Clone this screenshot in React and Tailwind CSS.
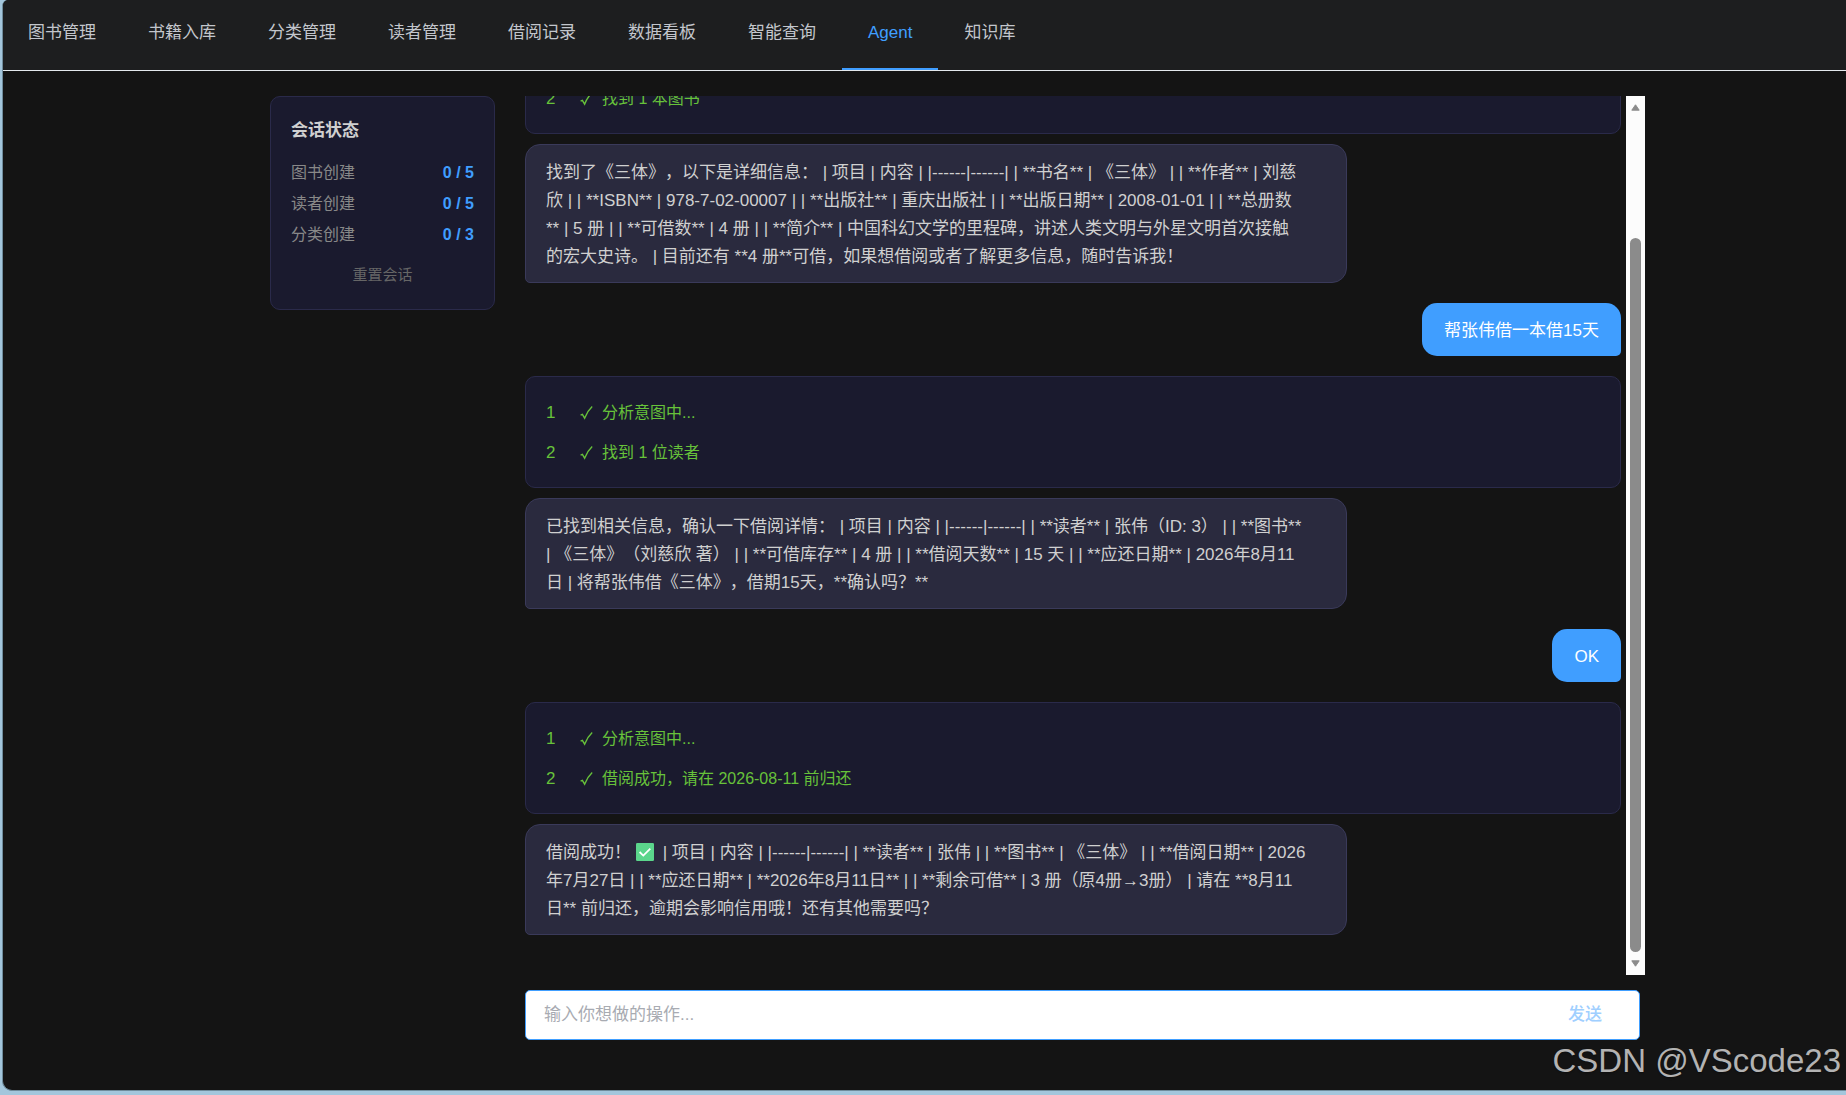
import { Fragment, useState } from 'react';

const TABS = ['图书管理', '书籍入库', '分类管理', '读者管理', '借阅记录', '数据看板', '智能查询', 'Agent', '知识库'];

const QUOTAS = [
  { label: '图书创建', value: '0 / 5' },
  { label: '读者创建', value: '0 / 5' },
  { label: '分类创建', value: '0 / 3' },
];

const MESSAGES = [
  {
    role: 'agent',
    steps: ['分析意图中...', '找到 1 本图书'],
    text: `找到了《三体》，以下是详细信息： | 项目 | 内容 | |------|------| | **书名** | 《三体》 | | **作者** | 刘慈
欣 | | **ISBN** | 978-7-02-00007 | | **出版社** | 重庆出版社 | | **出版日期** | 2008-01-01 | | **总册数
** | 5 册 | | **可借数** | 4 册 | | **简介** | 中国科幻文学的里程碑，讲述人类文明与外星文明首次接触
的宏大史诗。 | 目前还有 **4 册**可借，如果想借阅或者了解更多信息，随时告诉我！`,
  },
  { role: 'user', text: '帮张伟借一本借15天' },
  {
    role: 'agent',
    steps: ['分析意图中...', '找到 1 位读者'],
    text: `已找到相关信息，确认一下借阅详情： | 项目 | 内容 | |------|------| | **读者** | 张伟（ID: 3） | | **图书**
| 《三体》（刘慈欣 著） | | **可借库存** | 4 册 | | **借阅天数** | 15 天 | | **应还日期** | 2026年8月11
日 | 将帮张伟借《三体》，借期15天，**确认吗？**`,
  },
  { role: 'user', text: 'OK' },
  {
    role: 'agent',
    steps: ['分析意图中...', '借阅成功，请在 2026-08-11 前归还'],
    text: `借阅成功！✅ | 项目 | 内容 | |------|------| | **读者** | 张伟 | | **图书** | 《三体》 | | **借阅日期** | 2026
年7月27日 | | **应还日期** | **2026年8月11日** | | **剩余可借** | 3 册（原4册→3册） | 请在 **8月11
日** 前归还，逾期会影响信用哦！还有其他需要吗？`,
  },
];

const DoneEmoji = () => (
  <svg viewBox="0 0 18 18" className="inline-block w-[18px] h-[18px] ml-[5px] mr-1 align-[-3px]" role="img" aria-label="完成">
    <rect x="0" y="0" width="18" height="18" rx="1.2" fill="#5bd68c" />
    <path d="M3.6 9l3.7 3.6 7-7" fill="none" stroke="#fff" strokeWidth="1.8" />
  </svg>
);

const StepCheck = () => (
  <svg viewBox="0 0 13 15" className="w-[13px] h-[15px] mr-[9px] shrink-0" aria-hidden="true">
    <path d="M0.6 9.2L2.4 8.4L4.6 12.2C6.4 7.6 8.8 3.8 12.2 0.6" fill="none" stroke="currentColor" strokeWidth="1.4" />
  </svg>
);

// ✅ is swapped for an inline icon
const renderText = (text) =>
  text.split('✅').map((part, i) => (
    <Fragment key={i}>
      {i > 0 && <DoneEmoji />}
      {part}
    </Fragment>
  ));

const NavBar = ({ active, onChange }) => (
  <nav className="flex h-[71px] -ml-px shrink-0 bg-[#1d1e1f] border-b border-[#e4e9ed]">
    {TABS.map((tab) => (
      <button
        key={tab}
        type="button"
        onClick={() => onChange(tab)}
        className={`flex items-start pt-[21px] px-[26px] leading-6 whitespace-nowrap border-b-2 ${
          tab === active ? 'text-[#409eff] border-[#409eff]' : 'text-[#c3c6cc] border-transparent'
        }`}
      >
        {tab}
      </button>
    ))}
  </nav>
);

const SessionPanel = () => (
  <aside className="w-[225px] shrink-0 self-start p-5 rounded-[10px] border border-[#2a2a4a] bg-[#1a1a2e]">
    <h3 className="mb-3 leading-7 font-bold text-[#d0d0d0]">会话状态</h3>
    {QUOTAS.map((q) => (
      <div key={q.label} className="flex items-center justify-between h-[31px] text-base">
        <span className="text-[#888888]">{q.label}</span>
        <span className="font-bold text-[#409eff]">{q.value}</span>
      </div>
    ))}
    <button type="button" className="block w-full h-7 mt-[11px] text-[15px] text-[#666666]">
      重置会话
    </button>
  </aside>
);

const StepCard = ({ steps }) => (
  <ol className="mb-2.5 pt-4 pb-3.5 px-5 rounded-[10px] border border-[#2a2a4a] bg-[#1a1a2e] text-[#67c23a]">
    {steps.map((step, i) => (
      <li key={step + i} className="flex items-center h-10">
        <span className="w-[34px]">{i + 1}</span>
        <StepCheck />
        <span className="text-base">{step}</span>
      </li>
    ))}
  </ol>
);

const Message = ({ message }) => {
  if (message.role === 'user') {
    return (
      <div className="flex justify-end">
        <p className="pt-3.5 pb-[11px] px-[22px] leading-7 rounded-[15px] rounded-br-[5px] bg-[#409eff] text-white">
          {message.text}
        </p>
      </div>
    );
  }

  return (
    <div>
      <StepCard steps={message.steps} />
      <p className="w-3/4 pt-3.5 pb-[11px] pl-5 leading-7 whitespace-pre-line rounded-[15px] rounded-bl-[5px] border border-[#3a3a5a] bg-[#2a2a3e] text-[#d0d0d0]">
        {renderText(message.text)}
      </p>
    </div>
  );
};

const ScrollBar = () => (
  <div className="flex flex-col items-center w-[19px] ml-[5px] shrink-0 py-2 bg-[#fcfcfc]" aria-hidden="true">
    <svg viewBox="0 0 9 7" className="w-[9px] h-[7px] shrink-0">
      <path d="M4.5 0.8L8.2 6.2H0.8Z" fill="#8b8b8b" stroke="#8b8b8b" strokeLinejoin="round" />
    </svg>
    <div className="grow-[127] basis-0" />
    <div className="grow-[714] basis-0 w-[11px] rounded-full bg-[#8b8b8b]" />
    <svg viewBox="0 0 9 7" className="w-[9px] h-[7px] mt-2 shrink-0">
      <path d="M4.5 6.2L0.8 0.8H8.2Z" fill="#8b8b8b" stroke="#8b8b8b" strokeLinejoin="round" />
    </svg>
  </div>
);

const ChatInput = () => {
  const [value, setValue] = useState('');

  return (
    <form
      onSubmit={(e) => e.preventDefault()}
      className="flex items-center h-[50px] shrink-0 mt-[15px] mr-[5px] rounded-[5px] border border-[#409eff] bg-white"
    >
      <input
        type="text"
        aria-label="输入你想做的操作"
        placeholder="输入你想做的操作..."
        value={value}
        onChange={(e) => setValue(e.target.value)}
        className="flex-1 min-w-0 h-full pl-[18px] bg-transparent text-[#303133] placeholder:text-[#a8abb2] outline-none"
      />
      <button type="submit" className="h-full px-[37px] font-medium text-[#a0cfff]">
        发送
      </button>
    </form>
  );
};

export default function App() {
  const [active, setActive] = useState('Agent');

  return (
    <div
      lang="zh-CN"
      className="relative h-screen pl-0.5 pb-1 bg-[#a3c6dc] text-[17px] font-['Liberation_Sans','Noto_Sans_CJK_SC',sans-serif] [text-spacing-trim:space-all]"
    >
      <div className="flex flex-col h-full overflow-hidden rounded-tl-[6px] rounded-bl-[10px] border-l border-b border-[#6f8c9c] bg-[#141414]">
        <NavBar active={active} onChange={setActive} />
        <main className="flex flex-1 min-h-0 gap-[30px] pt-[25px] pb-[50px] pl-[267px] pr-[201px]">
          <SessionPanel />
          <section className="flex flex-col flex-1 min-w-0">
            <div className="flex flex-1 min-h-0">
              <div className="flex flex-col justify-end gap-5 flex-1 min-w-0 pb-10 overflow-hidden">
                {MESSAGES.map((message, i) => (
                  <Message key={i} message={message} />
                ))}
              </div>
              <ScrollBar />
            </div>
            <ChatInput />
          </section>
        </main>
      </div>
      <span className="absolute right-[5px] bottom-3.5 text-[33px] leading-10 text-[#b3b3b3] text-shadow-sm pointer-events-none">
        CSDN @VScode23
      </span>
    </div>
  );
}
